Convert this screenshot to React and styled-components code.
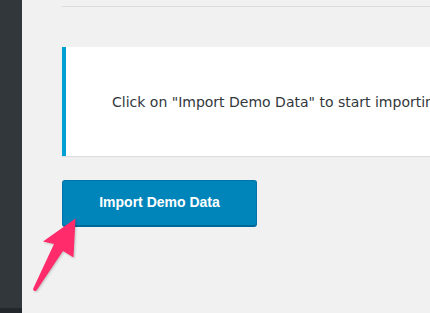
import styled, { createGlobalStyle } from "styled-components";

const GlobalStyle = createGlobalStyle`
  html, body {
    margin: 0;
    padding: 0;
    background: #f1f1f1;
    font-family: "Liberation Sans", Arial, sans-serif;
  }
`;

const Page = styled.div`
  position: relative;
  display: flex;
  width: 430px;
  height: 313px;
  overflow: hidden;
  background: #f1f1f1;
`;

const Sidebar = styled.div`
  flex: 0 0 22px;
  display: flex;
  flex-direction: column;
  justify-content: flex-end;
  background: #32373c;

  &::after {
    content: "";
    display: block;
    height: 5px;
    background: #23282d;
  }
`;

const Main = styled.div`
  flex: 1;
  padding: 6px 0 0 40px;
  min-width: 0;
`;

const Divider = styled.div`
  width: 700px;
  height: 1px;
  background: #dcdcdc;
`;

const Notice = styled.div`
  display: flex;
  align-items: center;
  width: 700px;
  height: 109px;
  margin-top: 40px;
  padding-left: 46px;
  box-sizing: border-box;
  background: #fff;
  border-left: 4px solid #00a0d2;
  box-shadow: 0 1px 1px rgba(0, 0, 0, 0.08);
  color: #32373c;
  font-family: "DejaVu Sans", "Liberation Sans", sans-serif;
  font-size: 14px;
  white-space: nowrap;
`;

const ImportButton = styled.button`
  display: block;
  width: 195px;
  height: 47px;
  margin-top: 24px;
  padding: 0 0 2px;
  border: 1px solid #0073aa;
  border-bottom: 2px solid #006799;
  border-radius: 3px;
  background: #0085ba;
  color: #fff;
  font-family: "Liberation Sans", Arial, sans-serif;
  font-size: 14px;
  font-weight: 600;
  cursor: pointer;
`;

const Arrow = styled.svg`
  position: absolute;
  left: 0;
  top: 0;
  pointer-events: none;
  filter: drop-shadow(1px 1px 1px rgba(0, 0, 0, 0.2));
`;

export default function App() {
  return (
    <Page>
      <GlobalStyle />
      <Sidebar />
      <Main>
        <Divider />
        <Notice>Click on "Import Demo Data" to start importing the demo content.</Notice>
        <ImportButton>Import Demo Data</ImportButton>
      </Main>
      <Arrow width="430" height="313" viewBox="0 0 430 313">
        <path
          d="M75.5 218.5 L43 241.5 L54 244 L33 289 Q33.5 292 36.5 290.5 L63 251 L73.5 257.5 Z"
          fill="#ff2b6b"
          strokeLinejoin="round"
        />
      </Arrow>
    </Page>
  );
}
